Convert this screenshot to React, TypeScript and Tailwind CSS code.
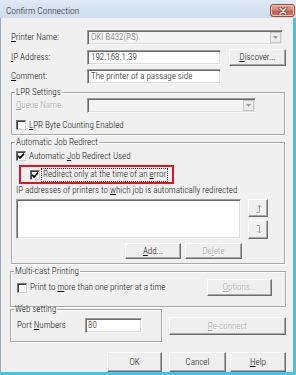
import React from "react";

type P = { children?: React.ReactNode; className?: string };

function Btn({ children, className = "", disabled = false }: P & { disabled?: boolean }) {
  return (
    <div
      className={
        "flex items-center justify-center bg-[#efefef] border border-t-[#fdfdfd] border-l-[#fdfdfd] border-r-[#6c6c6c] border-b-[#6c6c6c] shadow-[inset_-1px_-1px_0_#a8a8a8] " +
        (disabled ? "text-[#a3a3a3] [text-shadow:1px_1px_0_#ffffff] " : "text-[#111] ") +
        className
      }
    >
      <span>{children}</span>
    </div>
  );
}

function Sunken({ children, className = "" }: P) {
  return (
    <div
      className={
        "flex items-center border border-t-[#9c9c9c] border-l-[#9c9c9c] border-r-[#f7f7f7] border-b-[#f7f7f7] shadow-[inset_1px_1px_0_#6a6a6a,inset_-1px_-1px_0_#dedede] " +
        className
      }
    >
      <span>{children}</span>
    </div>
  );
}

function Check({ checked = false }: { checked?: boolean }) {
  return (
    <div className="flex h-[10px] w-[10px] shrink-0 items-center justify-center border border-t-[#707070] border-l-[#707070] border-r-[#d0d0d0] border-b-[#d0d0d0] bg-white shadow-[inset_1px_1px_0_#404040]">
      {checked && (
        <svg width="8" height="8" viewBox="0 0 8 8">
          <path d="M1 3.8 L3 6 L7 1.6" fill="none" stroke="#000" strokeWidth="1.6" />
        </svg>
      )}
    </div>
  );
}

function Combo({ className = "", text = "" }: P & { text?: string }) {
  return (
    <div
      className={
        "flex items-center border border-t-[#9c9c9c] border-l-[#9c9c9c] border-r-[#f7f7f7] border-b-[#f7f7f7] shadow-[inset_1px_1px_0_#6a6a6a,inset_-1px_-1px_0_#dedede] bg-[#f4f4f4] " +
        className
      }
    >
      <span className="flex-1 pl-[3px] text-[#6d6d6d]">{text}</span>
      <div className="mr-[1px] flex h-[11px] w-[11px] items-center justify-center border border-[#c8c8c8] bg-[#ececec]">
        <svg width="5" height="3" viewBox="0 0 5 3">
          <path d="M0 0 L5 0 L2.5 3 Z" fill="#9a9a9a" />
        </svg>
      </div>
    </div>
  );
}

function Legend({ children }: P) {
  return <legend className="ml-[3px] px-[1px] text-[9px] leading-[10px]">{children}</legend>;
}

const fs =
  "border border-[#a8a8a8] shadow-[inset_1px_1px_0_#ffffff,1px_1px_0_#ffffff] m-0 p-0 min-w-0";

function Arrow({ up }: { up: boolean }) {
  const d = up ? "M5.5 2 V9.5 H2.5 M3.5 4 L5.5 2 L7.5 4" : "M5.5 9 V1.5 H2.5 M3.5 7 L5.5 9 L7.5 7";
  return (
    <svg width="9" height="11" viewBox="0 0 9 11" className="block">
      <g fill="none" strokeWidth="1">
        <path d={d} stroke="#ffffff" transform="translate(1 1)" />
        <path d={d} stroke="#a0a0a0" />
      </g>
    </svg>
  );
}

const U = ({ children }: P) => <span className="underline underline-offset-1">{children}</span>;

export default function App() {
  return (
    <div className="flex h-[375px] w-[296px] flex-col overflow-hidden bg-[#cfdcec] font-['Roboto_Condensed',sans-serif] text-[9px] font-light leading-none text-[#111]">
      {/* title bar */}
      <div className="flex h-[18px] shrink-0 items-start bg-[linear-gradient(#e1eaf5,#cddbeb)]">
        <span className="pl-[6px] pt-[5px] text-[9.5px] leading-[11px] text-[#1c1c1c]">Confirm Connection</span>
        <div className="ml-auto mr-[1px] mt-[4px] flex h-[13px] w-[25px] items-center justify-center rounded-[3px] border border-[#9a4a3e] bg-[linear-gradient(#e4a89b_0%,#d6887a_45%,#c55a48_55%,#d27662_100%)] shadow-[inset_0_0_0_1px_#efc0b5]">
          <svg width="10" height="8" viewBox="0 0 10 8">
            <path d="M2 1 L8 7 M8 1 L2 7" stroke="#6a352c" strokeWidth="3" strokeLinecap="round" />
            <path d="M2 1 L8 7 M8 1 L2 7" stroke="#ffffff" strokeWidth="1.6" strokeLinecap="round" />
          </svg>
        </div>
      </div>

      {/* body */}
      <div className="flex flex-1 flex-col border-l border-r-[3px] border-b-[3px] border-l-[#98abbf] border-r-[#45c3e5] border-b-[#45c3e5] bg-[#f0f0f0] pl-[9px]">
        {/* Printer name */}
        <div className="ml-[1px] mt-[12px] flex h-[15px] items-center">
          <span className="w-[76px]">
            <U>P</U>rinter Name:
          </span>
          <Combo className="h-[15px] w-[196px]" text="OKI B432(PS)" />
        </div>
        {/* IP */}
        <div className="ml-[1px] mt-[4px] flex h-[17px] items-center">
          <span className="w-[76px]">
            <U>I</U>P Address:
          </span>
          <Sunken className="h-[15px] w-[134px] bg-white pl-[3px]">192.168.1.39</Sunken>
          <Btn className="ml-[8px] h-[17px] w-[57px]">
            <U>D</U>iscover...
          </Btn>
        </div>
        {/* Comment */}
        <div className="ml-[1px] mt-[3px] flex h-[15px] items-center">
          <span className="w-[76px]">
            <U>C</U>omment:
          </span>
          <Sunken className="h-[15px] w-[134px] bg-white pl-[3px]">The printer of a passage side</Sunken>
        </div>

        {/* LPR */}
        <fieldset className={fs + " ml-[1px] mt-[3px] h-[48px] w-[274px]"}>
          <Legend>LPR Settings</Legend>
          <div className="ml-[4px] mt-[1px] flex h-[15px] items-center">
            <span className="w-[71px] text-[#a3a3a3] [text-shadow:1px_1px_0_#ffffff]">
              <U>Q</U>ueue Name
            </span>
            <Combo className="h-[15px] w-[169px]" />
          </div>
          <div className="ml-[4px] mt-[6px] flex h-[12px] items-center gap-[3px]">
            <Check />
            <span>
              <U>L</U>PR Byte Counting Enabled
            </span>
          </div>
        </fieldset>

        {/* Auto redirect */}
        <fieldset className={fs + " ml-[1px] mt-[2px] h-[127px] w-[274px]"}>
          <Legend>Automatic Job Redirect</Legend>
          <div className="ml-[4px] mt-[3px] flex h-[12px] items-center gap-[3px]">
            <Check checked />
            <span>
              Automatic <U>J</U>ob Redirect Used
            </span>
          </div>
          <div className="ml-[7px] mt-[3px] flex h-[19px] w-[155px] items-center border-2 border-[#e3141f] pl-[9px]">
            <Check checked />
            <div className="ml-[1px] flex h-[14px] items-center border border-dotted border-[#303030] px-[1px]">
              <span>
                Redirect only at the time of an <U>e</U>rror
              </span>
            </div>
          </div>
          <div className="ml-[4px] mt-[1px] flex h-[11px] items-center">
            <span>
              IP addresses of printers to <U>w</U>hich job is automatically redirected
            </span>
          </div>
          <div className="ml-[4px] mt-[3px] flex items-start">
            <Sunken className="h-[40px] w-[225px] bg-white" />
            <div className="ml-[7px] flex flex-col">
              <Btn disabled className="h-[18px] w-[20px]">
                <Arrow up />
              </Btn>
              <Btn disabled className="mt-[3px] h-[19px] w-[20px]">
                <Arrow up={false} />
              </Btn>
            </div>
          </div>
          <div className="ml-[113px] mt-[4px] flex h-[16px] gap-[4px]">
            <Btn className="h-[16px] w-[56px]">
              <U>A</U>dd...
            </Btn>
            <Btn disabled className="h-[16px] w-[57px]">
              De<U>l</U>ete
            </Btn>
          </div>
        </fieldset>

        {/* Multi-cast */}
        <fieldset className={fs + " mt-[2px] h-[41px] w-[276px]"}>
          <Legend>Multi-cast Printing</Legend>
          <div className="ml-[6px] mt-[3px] flex h-[17px] items-center">
            <Check />
            <span className="ml-[3px]">
              Print to <U>m</U>ore than one printer at a time
            </span>
            <Btn disabled className="ml-auto mr-[13px] h-[17px] w-[65px]">
              <U>O</U>ptions...
            </Btn>
          </div>
        </fieldset>

        {/* Web setting + reconnect */}
        <div className="-mt-[3px] flex items-start">
          <fieldset className={fs + " h-[38px] w-[152px]"}>
            <Legend>Web setting</Legend>
            <div className="ml-[6px] mt-[4px] flex h-[15px] items-center">
              <span className="w-[68px]">
                Port <U>N</U>umbers
              </span>
              <Sunken className="h-[15px] w-[57px] bg-white pl-[2px]">80</Sunken>
            </div>
          </fieldset>
          <Btn disabled className="ml-[7px] mt-[13px] h-[18px] w-[117px]">
            <U>R</U>e-connect
          </Btn>
        </div>

        {/* bottom buttons */}
        <div className="ml-[97px] mt-[10px] flex h-[20px]">
          <Btn className="h-[20px] w-[55px] border-r-[#3c3c3c] border-b-[#3c3c3c]">OK</Btn>
          <Btn className="ml-[7px] h-[20px] w-[57px]">Cancel</Btn>
          <Btn className="ml-[4px] h-[20px] w-[56px]">
            <U>H</U>elp
          </Btn>
        </div>
      </div>
    </div>
  );
}
